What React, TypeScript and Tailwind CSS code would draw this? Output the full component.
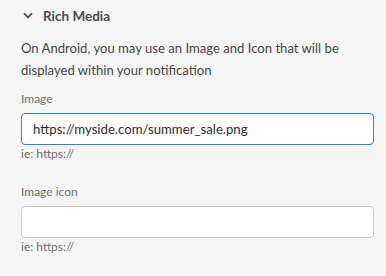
function Chevron() {
  return (
    <svg width="10" height="8" viewBox="0 0 10 8" className="block shrink-0">
      <path d="M1.5 1.8 L5 5.3 L8.5 1.8" fill="none" stroke="#4b4b4b" strokeWidth="1.8" strokeLinecap="round" strokeLinejoin="round" />
    </svg>
  );
}

function Field({ label, value, focused }: { label: string; value: string; focused?: boolean }) {
  return (
    <div className="flex flex-col">
      <div className="text-[12px] leading-[16px] text-[#6e6e6e]">{label}</div>
      <div
        className={
          focused
            ? "mt-[6px] h-[32px] rounded-[4px] border border-[#2680eb] bg-white pl-[11px] flex items-center"
            : "mt-[6px] h-[32px] rounded-[4px] border border-[#cacaca] bg-white pl-[11px] flex items-center"
        }
      >
        <span className="text-[13.2px] text-[#2c2c2c] leading-[20px]">{value}</span>
      </div>
      <div className="mt-[1px] text-[12px] leading-[16px] text-[#6e6e6e]">ie: https://</div>
    </div>
  );
}

export default function App() {
  return (
    <div className="w-[386px] h-[276px] bg-[#f5f5f5] overflow-hidden" style={{ fontFamily: "Lato, sans-serif" }}>
      <div className="pt-[6px] pl-[23px] flex items-center h-[26px]">
        <Chevron />
        <span className="ml-[10px] text-[13.5px] font-bold leading-[20px] text-[#4b4b4b]">Rich Media</span>
      </div>
      <div className="pl-[21px] pr-[12px]">
        <p className="mt-[11px] text-[13.1px] leading-[22px] text-[#464646]">
          On Android, you may use an Image and Icon that will be displayed within your notification
        </p>
        <div className="mt-[10px]">
          <Field label="Image" value="https://myside.com/summer_sale.png" focused />
        </div>
        <div className="mt-[22px]">
          <Field label="Image icon" value="" />
        </div>
      </div>
    </div>
  );
}
